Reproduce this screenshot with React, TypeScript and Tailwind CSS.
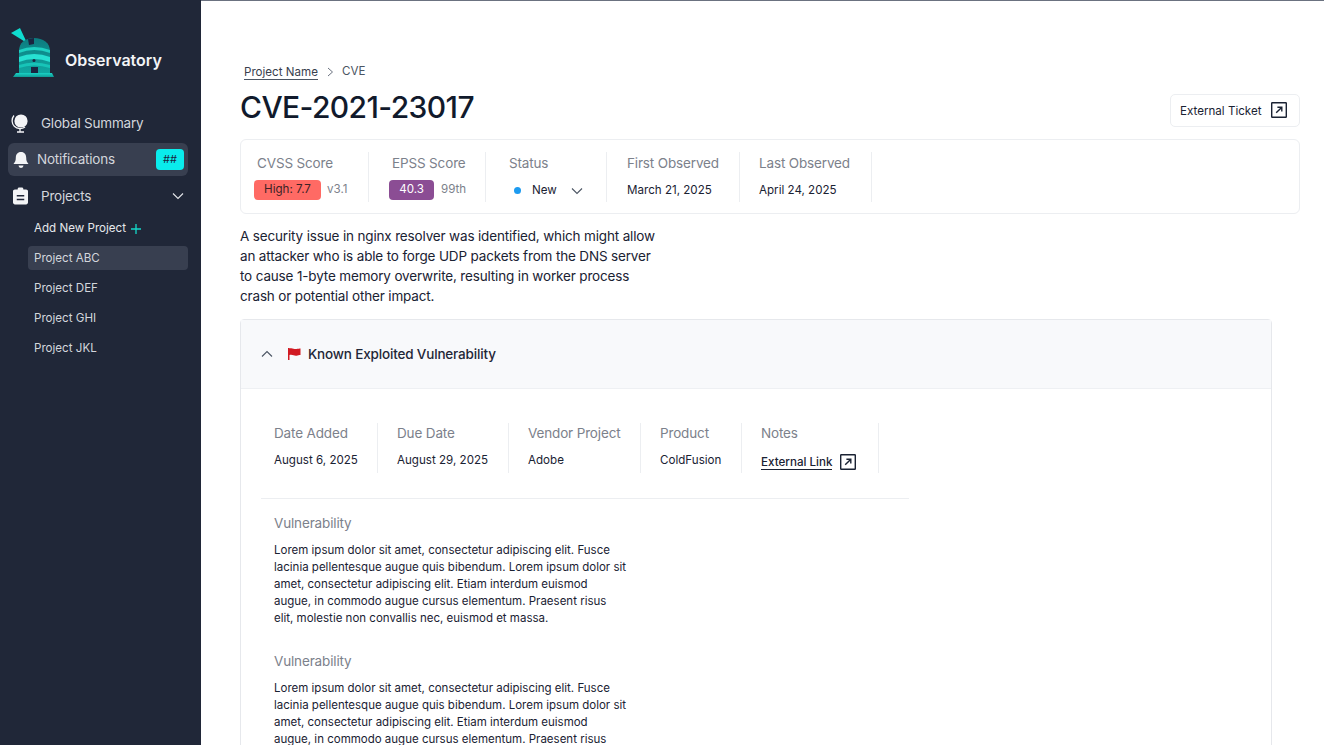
import React from "react";

const Ext = ({ size = 16 }: { size?: number }) => (
  <svg width={size} height={size} viewBox="0 0 16 16" fill="none" stroke="#1a2233" strokeWidth="1.4" className="shrink-0">
    <rect x="0.7" y="0.7" width="14.6" height="14.6" rx="0.5" />
    <path d="M5.2 10.8 10.6 5.4M6.4 5.2h4.4v4.4" />
  </svg>
);

const Chevron = ({ up = false, color = "#4b5563" }: { up?: boolean; color?: string }) => (
  <svg width="12" height="8" viewBox="0 0 12 8" fill="none" stroke={color} strokeWidth="1.1" className="shrink-0">
    <path d={up ? "M1 6.5 6 1.5l5 5" : "M1 1.5l5 5 5-5"} />
  </svg>
);

const Logo = () => (
  <svg width="44" height="52" viewBox="0 0 44 52" className="shrink-0 mb-[15px]">
    <defs>
      <linearGradient id="dome" x1="0" y1="0" x2="0" y2="1">
        <stop offset="0" stopColor="#0d7a7e" />
        <stop offset="1" stopColor="#0fa8a2" />
      </linearGradient>
      <linearGradient id="base" x1="0" y1="0" x2="0" y2="1">
        <stop offset="0" stopColor="#19d2c5" />
        <stop offset="1" stopColor="#0f9a95" />
      </linearGradient>
    </defs>
    <path d="M0 6 9 1l7 15z" fill="#0fdccf" />
    <path d="M8 46V24C8 16 14 11 23 11c9 0 16 5 16 13v22z" fill="url(#dome)" />
    <path d="M17 12l6-1v6l-5 1z" fill="#1b2540" />
    <path d="M8 23q15-6 31 0v3q-16-6-31 0z" fill="#1fd0c2" />
    <path d="M8 30q15-6 31 0v5q-16-6-31 0z" fill="#27e0d2" />
    <circle cx="23" cy="33.500" r="1.500" fill="#1b2540" />
    <path d="M8 38q15-5 31 0v3q-16-5-31 0z" fill="#17c4b8" />
    <rect x="20" y="40" width="7" height="6" fill="#1b2540" />
    <path d="M5 46h36l2 4H2z" fill="url(#base)" />
  </svg>
);

const Globe = () => (
  <svg width="20" height="20" viewBox="0 0 20 20" className="shrink-0">
    <circle cx="10" cy="8" r="6.6" fill="#f3f4f6" />
    <path d="M3 2.500a8 8 0 0 0 11 11.500" fill="none" stroke="#f3f4f6" strokeWidth="1.300" />
    <path d="M9 16v2.500M6 19h7" stroke="#f3f4f6" strokeWidth="1.300" fill="none" />
  </svg>
);

const Bell = () => (
  <svg width="18" height="18" viewBox="0 0 18 18" fill="#f3f4f6" className="shrink-0">
    <path d="M9 1c3.500 0 5.200 2.600 5.200 5.800 0 3 .7 4.300 2.300 6.200H1.500c1.600-1.900 2.300-3.200 2.300-6.200C3.800 3.600 5.500 1 9 1z" />
    <path d="M6.500 14.500h5a2.500 2.500 0 0 1-5 0z" />
  </svg>
);

const Clip = () => (
  <svg width="15" height="18" viewBox="0 0 16 18" className="shrink-0">
    <path fillRule="evenodd" fill="#f3f4f6" d="M2 2h3V1.500C5 .7 5.700 0 6.500 0h3c.8 0 1.500.7 1.500 1.500V2h3c1 0 2 .8 2 2v12c0 1.200-1 2-2 2H2c-1 0-2-.8-2-2V4c0-1.200 1-2 2-2zm2 6v1.500h8V8zm0 4v1.500h8V12z" />
  </svg>
);

const Divided = ({ className, children }: { className: string; children: React.ReactNode }) => (
  <div className={`flex flex-col border-r border-[#eceef1] shrink-0 ${className}`}>{children}</div>
);

const Label = ({ children, className = "" }: { children: React.ReactNode; className?: string }) => (
  <div className={`text-[13.5px] tracking-[-0.15px] leading-[20px] text-[#7c818b] ${className}`}>{children}</div>
);

const Lorem = () => (
  <div className="mb-[24px]">
    <Label className="mb-[9px]">Vulnerability</Label>
    <p className="w-[353px] text-[11.5px] leading-[17px] text-[#1a2233]">
      Lorem ipsum dolor sit amet, consectetur adipiscing elit. Fusce lacinia pellentesque augue quis bibendum. Lorem ipsum dolor sit amet, consectetur adipiscing elit. Etiam interdum euismod augue, in commodo augue cursus elementum. Praesent risus elit, molestie non convallis nec, euismod et massa.
    </p>
  </div>
);

const projects = ["Project DEF", "Project GHI", "Project JKL"];

export default function App() {
  return (
    <div className="flex h-[745px] w-[1324px] overflow-hidden bg-white font-['Inter',sans-serif]">
      <aside className="w-[201px] shrink-0 bg-[#202738] text-[#e5e7eb] flex flex-col">
        <div className="flex items-center gap-[10px] pl-[11px] pt-[21px] h-[99px]">
          <Logo />
          <span className="text-[16px] font-semibold text-[#f3f4f6]">Observatory</span>
        </div>
        <div className="h-[30px] mt-[9px] flex items-center gap-[10px] pl-[11px]">
          <Globe />
          <span className="text-[13.5px] tracking-[-0.2px] text-[#d3d6dc]">Global Summary</span>
        </div>
        <div className="h-[33px] mt-[5px] ml-[8px] mr-[13px] rounded-[6px] bg-[#383f50] flex items-center pl-[4px] pr-[4px]">
          <Bell />
          <span className="ml-[7px] text-[13.5px] tracking-[-0.2px] text-[#d3d6dc]">Notifications</span>
          <span className="ml-auto w-[28px] h-[21px] rounded-[4px] bg-[#0aecec] text-[#1b2540] text-[11px] flex items-center justify-center">##</span>
        </div>
        <div className="h-[30px] mt-[5px] flex items-center pl-[13px] pr-[17px]">
          <Clip />
          <span className="ml-[13px] text-[13.5px] tracking-[-0.2px] text-[#d3d6dc]">Projects</span>
          <span className="ml-auto"><Chevron color="#e5e7eb" /></span>
        </div>
        <div className="mt-[5px] flex flex-col gap-[6px] pl-[28px] pr-[13px] text-[11.6px] text-[#e5e7eb]">
          <div className="h-[24px] pl-[6px] pt-[2px] flex items-center gap-[4px]">
            Add New Project
            <svg width="12" height="12" viewBox="0 0 12 12" stroke="#14d8c8" strokeWidth="1.300"><path d="M6 1v10M1 6h10" /></svg>
          </div>
          <div className="h-[24px] pl-[6px] pt-[2px] flex items-center rounded-[4px] bg-[#383f50] text-[#d3d6dc]">Project ABC</div>
          {projects.map((p) => (
            <div key={p} className="h-[24px] pl-[6px] pt-[2px] flex items-center text-[#d3d6dc]">{p}</div>
          ))}
        </div>
      </aside>

      <main className="flex-1 min-w-0 border-t border-[#6b7280] pl-[39px] pr-[24px] pt-[61px] text-[#1a2233]">
        <div className="flex items-center pl-[4px] h-[20px] text-[11.6px]">
          <span className="border-b border-[#4b5563] leading-[14px] text-[#39404e]">Project Name</span>
          <svg width="7" height="10" viewBox="0 0 7 10" fill="none" stroke="#6b7280" strokeWidth="1" className="ml-[9px] mr-[9px]"><path d="M1 1l4.500 4L1 9" /></svg>
          <span className="text-[#4b5563] -ml-[1px]">CVE</span>
        </div>
        <div className="flex items-center justify-between h-[46px] mt-[2px]">
          <h1 className="text-[30px] tracking-[-0.6px] leading-[40px] font-medium text-[#111a2c]">CVE-2021-23017</h1>
          <button className="h-[33px] w-[130px] mt-[6px] rounded-[5px] border border-[#eceef1] flex items-center pl-[9px] gap-[9px] text-[11.6px] text-[#1a2233]">
            <span className="mt-[3px]">External Ticket</span> <Ext />
          </button>
        </div>

        <div className="mt-[9px] h-[75px] rounded-[6px] border border-[#eceef1] flex items-center pl-[13px]">
          <Divided className="w-[115px] h-[50px]">
            <Label className="pl-[3px] mt-[1px]">CVSS Score</Label>
            <div className="mt-[7px] flex items-center gap-[6px]">
              <span className="w-[67px] h-[20px] pt-[1px] rounded-[4px] bg-[#ff6a64] text-[11.6px] text-[#3b2226] flex items-center justify-center">High: 7.7</span>
              <span className="text-[11.6px] text-[#7c818b]">v3.1</span>
            </div>
          </Divided>
          <Divided className="w-[117px] h-[50px] pl-[20px]">
            <Label className="pl-[3px] mt-[1px]">EPSS Score</Label>
            <div className="mt-[7px] flex items-center gap-[7px]">
              <span className="w-[45px] h-[20px] pt-[1px] rounded-[4px] bg-[#8b4d94] text-[11.6px] text-white flex items-center justify-center">40.3</span>
              <span className="text-[11.6px] text-[#7c818b]">99th</span>
            </div>
          </Divided>
          <Divided className="w-[121px] h-[50px] pl-[23px]">
            <Label className="mt-[1px]">Status</Label>
            <div className="mt-[8px] h-[20px] flex items-center text-[11.6px] pl-[5px]">
              <span className="w-[7px] h-[7px] rounded-full bg-[#1d9bf0]" />
              <span className="ml-[11px]">New</span>
              <span className="ml-[14px]"><Chevron /></span>
            </div>
          </Divided>
          <Divided className="w-[133px] h-[50px] pl-[20px]">
            <Label className="mt-[1px]">First Observed</Label>
            <div className="mt-[8px] h-[20px] flex items-center text-[11.6px]">March 21, 2025</div>
          </Divided>
          <Divided className="w-[132px] h-[50px] pl-[19px]">
            <Label className="mt-[1px]">Last Observed</Label>
            <div className="mt-[8px] h-[20px] flex items-center text-[11.6px]">April 24, 2025</div>
          </Divided>
        </div>

        <p className="mt-[12px] w-[420px] text-[13.5px] tracking-[-0.16px] leading-[20px] text-[#1a2233]">
          A security issue in nginx resolver was identified, which might allow an attacker who is able to forge UDP packets from the DNS server to cause 1-byte memory overwrite, resulting in worker process crash or potential other impact.
        </p>

        <section className="mt-[13px] w-[1032px] rounded-t-[4px] border border-[#e6e8ec]">
          <div className="h-[69px] bg-[#f8f9fb] border-b border-[#eef0f3] flex items-center pl-[20px] gap-[15px]">
            <Chevron up />
            <svg width="13" height="12" viewBox="0 0 13 12" fill="#d11a22" className="shrink-0"><path d="M0 0h1.500v12H0zM1.500 .5c3-1 4.500 1 7 .5 1.500-.2 3-.5 4-.5V7c-1.500 0-2.500.5-4 .7-2.500.3-4-1.500-7-.7z" /></svg>
            <span className="-ml-[8px] text-[13.5px] tracking-[-0.17px] font-medium text-[#1f2737]">Known Exploited Vulnerability</span>
          </div>
          <div className="pl-[20px] pt-[34px]">
            <div className="w-[648px] flex border-b border-[#eceef1] pb-[25px]">
              <Divided className="w-[117px] h-[50px] pl-[13px]">
                <Label>Date Added</Label>
                <div className="mt-[7px] text-[11.6px] leading-[20px]">August 6, 2025</div>
              </Divided>
              <Divided className="w-[131px] h-[50px] pl-[19px]">
                <Label>Due Date</Label>
                <div className="mt-[7px] text-[11.6px] leading-[20px]">August 29, 2025</div>
              </Divided>
              <Divided className="w-[132px] h-[50px] pl-[19px]">
                <Label>Vendor Project</Label>
                <div className="mt-[7px] text-[11.6px] leading-[20px]">Adobe</div>
              </Divided>
              <Divided className="w-[101px] h-[50px] pl-[19px]">
                <Label>Product</Label>
                <div className="mt-[7px] text-[11.6px] leading-[20px]">ColdFusion</div>
              </Divided>
              <Divided className="w-[137px] h-[50px] pl-[19px]">
                <Label>Notes</Label>
                <div className="mt-[9px] flex items-center gap-[8px] h-[20px]">
                  <span className="text-[11.6px] font-medium border-b border-[#1a2233] leading-[14px]">External Link</span>
                  <Ext />
                </div>
              </Divided>
            </div>
            <div className="pl-[13px] pt-[14px]">
              <Lorem />
              <Lorem />
            </div>
          </div>
        </section>
      </main>
    </div>
  );
}
